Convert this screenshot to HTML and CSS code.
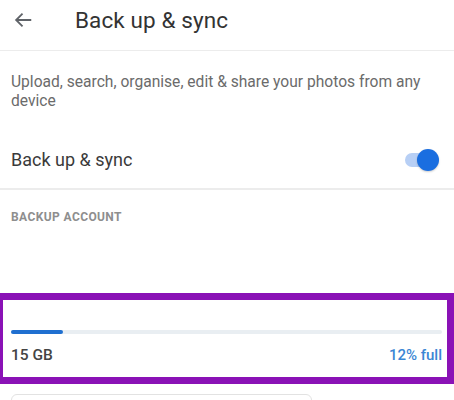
FILE: index.html
```html
<!DOCTYPE html>
<html>
<head>
<meta charset="utf-8">
<link rel="stylesheet" href="styles.css">
</head>
<body>
<div class="screen">
  <header class="appbar">
    <span class="back">
      <svg width="22" height="22" viewBox="0 0 24 24"><path d="M21 12H4.5M11.5 5l-7 7 7 7" fill="none" stroke="#5f6368" stroke-width="2"/></svg>
    </span>
    <h1 class="title">Back up &amp; sync</h1>
  </header>
  <section class="main">
    <p class="desc">Upload, search, organise, edit &amp; share your photos from any device</p>
    <div class="toggle-row">
      <span class="toggle-label">Back up &amp; sync</span>
      <span class="switch"><span class="track"></span><span class="thumb"></span></span>
    </div>
  </section>
  <section class="account">
    <div class="section-label">BACKUP ACCOUNT</div>
  </section>
  <section class="storage">
    <div class="bar"><div class="fill" style="width:12%"></div></div>
    <div class="storage-row">
      <span class="gb">15 GB</span>
      <span class="pct">12% full</span>
    </div>
  </section>
  <div class="next-card"></div>
</div>
</body>
</html>
```
FILE: styles.css
```css
* { box-sizing: border-box; }
html, body { margin: 0; padding: 0; background: #fff; }
body { font-family: Roboto, "Noto Sans", Arial, sans-serif; width: 454px; height: 400px; overflow: hidden; }
.screen { display: flex; flex-direction: column; }
.appbar {
  height: 51px;
  display: flex;
  align-items: center;
  border-bottom: 1px solid #ececec;
  padding-left: 12px;
  padding-bottom: 10px;
}
.back { display: flex; width: 22px; height: 22px; }
.title {
  margin: 0 0 0 41px;
  font-size: 22.5px;
  font-weight: 400;
  color: #333;
  letter-spacing: 0.1px;
}
.main { padding: 0 11px; border-bottom: 2px solid #ececec; }
.desc {
  margin: 22px 0 0;
  font-size: 15.6px;
  line-height: 19px;
  color: #6b6b6b;
}
.toggle-row {
  height: 57px;
  margin-top: 20px;
  display: flex;
  align-items: center;
  justify-content: space-between;
}
.toggle-label { font-size: 18px; color: #3a3a3a; }
.switch { position: relative; width: 36px; height: 24px; margin-right: 4px; }
.track {
  position: absolute; left: 2px; top: 5px; width: 30px; height: 14px;
  border-radius: 7px; background: #b7cff5;
}
.thumb {
  position: absolute; right: 0; top: 1px; width: 22px; height: 22px;
  border-radius: 50%; background: #1a6ee0;
  box-shadow: 0 1px 2px rgba(0,0,0,0.2);
}
.account { height: 103px; padding: 20px 11px 0; }
.section-label {
  font-size: 12px;
  font-weight: 700;
  color: #8e8e8e;
  letter-spacing: 0.4px;
}
.storage {
  border: 7px solid #8a12b6;
  border-left-width: 3px;
  height: 91px;
  padding: 30px 5px 0 8px;
}
.bar { height: 4px; background: #e9eef2; border-radius: 2px; }
.fill { height: 4px; background: #1f6fd0; border-radius: 2px; }
.storage-row {
  margin-top: 12px;
  display: flex;
  justify-content: space-between;
  align-items: center;
  font-size: 15.5px;
  font-weight: 500;
}
.gb { color: #444; }
.pct { color: #3a86d4; font-size: 15px; }
.next-card {
  margin: 10px 0 0 11px;
  width: 301px;
  height: 20px;
  border: 1px solid #e2e2e2;
  border-radius: 6px;
}
```
